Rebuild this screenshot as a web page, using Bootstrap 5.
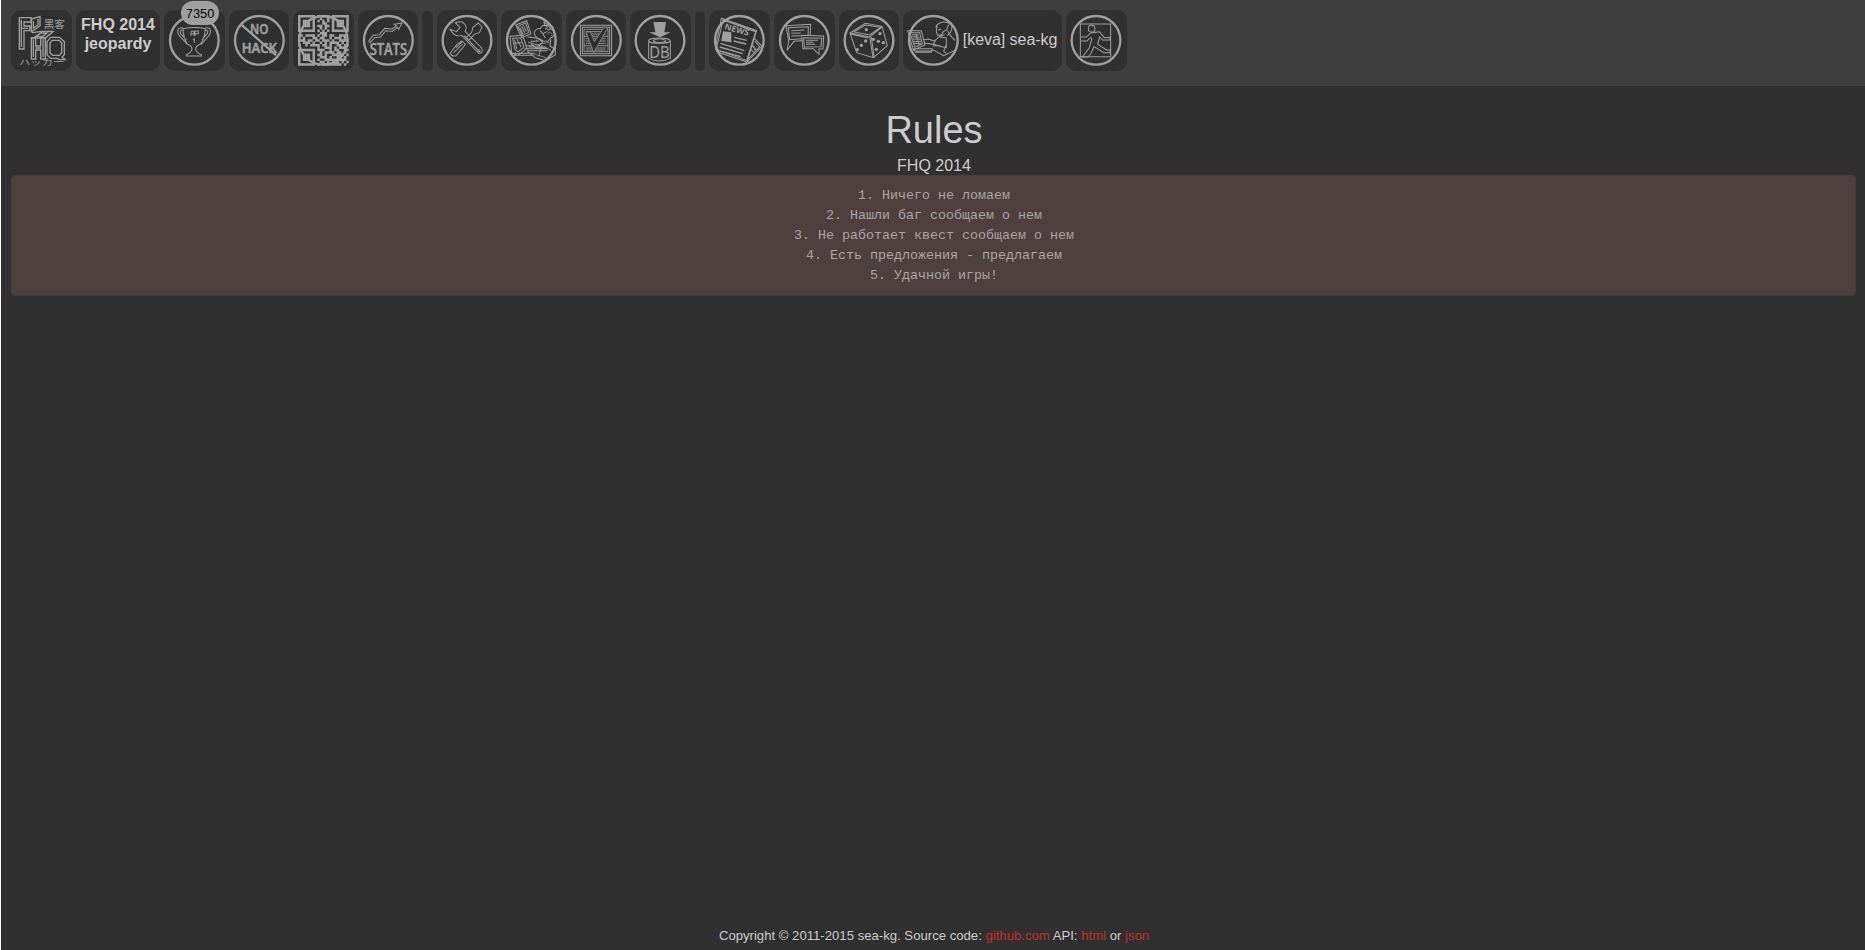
<!DOCTYPE html>
<html lang="ru">
<head>
<meta charset="utf-8">
<title>FHQ 2014 jeopardy</title>
<link rel="stylesheet" href="https://cdn.jsdelivr.net/npm/bootstrap@5.3.0/dist/css/bootstrap.min.css">
<style>
html{background:#fff;overflow:hidden}
body{margin-left:1px;min-height:950px;background:#303030;color:#ccc;font-family:"Liberation Sans",Arial,sans-serif;font-size:16px;line-height:20px}
.topbar{height:86px;background:#3e3e3e;padding:10px 0 0 10.4px;gap:4.03px}
.tile{height:61px;width:60.6px;border-radius:10px;background:#303030;padding:5px;flex:none}
.tile svg{width:50.7px;height:50.7px;display:block;flex:none;fill:none;stroke:#a0a0a0;stroke-width:3;overflow:visible}
.tile svg .ring{stroke-width:7}
.tile svg .solid{fill:#a0a0a0;stroke:none}
.tile svg text{fill:#a0a0a0;stroke:none}
.tile svg .heavy{stroke:#a0a0a0;stroke-width:1.6}
.tile svg .thin{stroke-width:2}
.slot{width:10.2px;height:60px;margin-top:1px;border-radius:5px;background:#303030;flex:none}
.brand{width:84px;font-weight:bold;line-height:19.2px;text-align:center}
.who{width:159px;gap:4px;white-space:nowrap}
.who span{letter-spacing:-.05px;margin-top:-2px}
.score{position:absolute;left:17px;top:-9px;width:38px;height:24px;line-height:25px;border-radius:12px;background:#a0a0a0;color:#000;font-size:12.8px;text-align:center}
h1{font-size:38px;line-height:44px;font-weight:400;margin:0;padding:22px 0 0 2px}
.subtitle{margin-top:4px;padding-left:2px;line-height:20px}
.rules{margin:-1px 9px 0 10px;height:121px;padding:10px 9px 8px 10px;border:1px solid #483b3b;border-radius:4px;background:#4f403f;color:#aaa4a2;font:13.33px/20px "Liberation Mono","Courier New",monospace}
.foot{font-size:13.15px;line-height:16px;padding:0 0 6px 2px}
.foot a{color:#c12e2a;text-decoration:none}
</style>
<script src="https://cdn.jsdelivr.net/npm/bootstrap@5.3.0/dist/js/bootstrap.bundle.min.js"></script>
</head>
<body class="d-flex flex-column">
<nav class="topbar d-flex align-items-start">
 <div class="tile"><svg viewBox="48 45 152 152"><g stroke-width="4"><path d="M58 53h35v13H72v12h17v14H72v55H58zM94 57l26-7v28l-26 17zM64 59v82M64 85h20M100 62v22l14-9V57M96 98l30-4h34l-24 20H96M108 109l14-10h19l-13 10z"/><path d="M94 113h13v25h15v-25h14v64h-14v-27h-15v27H94zM100 118v53M129 118v53M106 144h17"/><path d="M152 112h26l15 13v39l-7 7 9 8h-17l-6-4h-20l-11-11v-39zM157 121l-7 8v29l8 8h20l7-8v-29l-8-8z"/></g><text x="131" y="84" font-size="32" font-family="Noto Sans CJK SC">黑客</text><text transform="translate(57 194) scale(1 .68)" x="0" y="0" font-size="33" textLength="136" lengthAdjust="spacingAndGlyphs" font-family="Noto Sans CJK JP">ハッカー</text></svg></div>
 <div class="tile brand">FHQ 2014<br>jeopardy</div>
 <div class="tile position-relative"><svg viewBox="508 45 152 152"><circle class="ring" cx="584" cy="121" r="73"/><path d="M550 86q34-7 67 0-2 30-15 46-14 7-14 14 0 10 17 18v4h-45v-4q17-8 17-18 0-7-14-14-11-16-13-46zM550 84c-17-5-21 11-9 25l23 25M617 84c17-5 20 11 9 25l-22 25M549 91c-10-3-10 7-1 15l12 14M617 91c10-3 10 7 1 15l-11 14M574 94h9v13M574 94v14M586 108V93h10v8h-8M574 101h22M580 120l4-3v12"/></svg><span class="score">7350</span></div>
 <div class="tile"><svg viewBox="42 45 152 152"><circle class="ring" cx="118" cy="121" r="73"/><path class="ring" d="M62 72l106 93"/><g font-family="Open Sans" font-weight="600" font-size="43"><text class="heavy" x="90" y="102" textLength="55" lengthAdjust="spacingAndGlyphs">NO</text><text class="heavy" x="65" y="159" textLength="106" lengthAdjust="spacingAndGlyphs">HACK</text></g></svg></div>
 <div class="tile"><svg viewBox="234 45 152 152"><path id="qr" class="solid"/><circle class="ring" cx="310" cy="121" r="73"/></svg></div>
 <div class="tile"><svg viewBox="429 45 152 152"><circle class="ring" cx="505" cy="121" r="73"/><path d="M446 123l13-17 19-2 16-19 21 2 15-9-7-5 23-4-10 20-3-7-17 12-19-2-15 19-18 2-14 15z"/><text class="heavy" x="449" y="164" font-family="Open Sans" font-weight="600" font-size="47" textLength="112" lengthAdjust="spacingAndGlyphs">STATS</text></svg></div>
 <div class="slot"></div>
 <div class="tile"><svg viewBox="66 45 152 152"><circle class="ring" cx="141" cy="121" r="73"/><path d="M106 68q24-9 32 12 2 9-3 14l50 50q6 16-9 16l-51-54q-20 8-35-18l20 7 10-13zM175 69l11 12-8 17-15 5-16 17-8-8 16-15 4-15zM126 123l10 10-10 13-18 21q-13 4-17-8l20-26zM108 143l17-16M101 158l27-26M132 107l43 44"/><circle cx="177" cy="152" r="3"/></svg></div>
 <div class="tile"><svg viewBox="258 45 152 152"><circle class="ring" cx="334" cy="121" r="73"/><path d="M287 75l33-13 13 39-28 12zM293 79l24-10 9 28-19 9zM299 81l10 21M305 78l9 20M311 76l8 19M270 109l38-3 13 39-28 21-18-8zM278 115l24-2 10 29-18 13-9-5zM284 119l6 28M291 118l12 23M282 130l22-2M273 160h71M281 166h60M322 110l31 5 15 11-10 11-33-10M314 146h70M321 152h61M350 112c-16-13-2-29 11-26 4-12 26-15 29 0 18 4 15 24 2 28l-8 10-15-1zM360 92l9 9 14-7M369 103l7 11M370 67l28 13 8 24M373 58v17l10 7M390 91l-15-6M392 118l-2 20 16 11M334 133l14 10h30l15 8M322 154l25 20 30 8 29-18V100M356 169l10-33M333 124h22M319 137h23"/><path class="thin" d="M325 139h51M326 142h37M336 160l42 13M365 118l-17 3M350 134l38-7M382 103c5-10 15-6 13 4"/></svg></div>
 <div class="tile"><svg viewBox="453 45 152 152"><circle class="ring" cx="529" cy="121" r="73"/><path d="M481 76h94v91h-94zM487 82h82v79h-82z"/><path d="M492 88h72v67h-72zM497 95h60M497 102h60M492 109h72M497 116h60M497 123h60M497 130h60M492 137h72M497 144h60M497 150h60" style="stroke-width:2.5"/><path class="thin" d="M498 96h14l11 29 29-43h12l-43 76z" fill="#303030"/></svg></div>
 <div class="tile"><svg viewBox="48 45 152 152"><circle class="ring" cx="123" cy="121" r="73"/><path class="solid" d="M103 66h38l-5 31h19l-32 15-33-15h19z"/><path d="M89 122v53q32 16 65 0v-53"/><ellipse cx="121" cy="122" rx="32" ry="8"/><path d="M102 121q20-10 39 0M102 123q20 10 39 0"/><text class="heavy" x="91" y="174" font-family="Open Sans" font-size="47" textLength="61" lengthAdjust="spacingAndGlyphs" style="stroke-width:.6">DB</text></svg></div>
 <div class="slot"></div>
 <div class="tile"><svg viewBox="282 45 152 152"><circle class="ring" cx="358" cy="121" r="73"/><path d="M304 55l106 37-29 94-88-30q-11-9-4-27zM309 60l98 35-27 86-83-29q-9-10-3-26zM404 116l22 23-45 47M405 124l14 16-34 37M397 138l13 13M392 148l10 10M401 136l4 15"/><path class="solid" d="M309 94l25 3v30l-30-4z"/><path stroke-width="4" d="M343 112l37 9M341 123l37 9M301 130l72 22M299 141l69 20M297 152l65 18"/><text transform="translate(312 87) rotate(16)" font-family="Open Sans" font-weight="700" font-size="25" textLength="75" lengthAdjust="spacingAndGlyphs">NEWS</text></svg></div>
 <div class="tile"><svg viewBox="477 45 152 152"><circle class="ring" cx="553" cy="121" r="73"/><path d="M498 77l74-4-2 47-48 4-21 27 5-27zM505 83l60-3-1 35-55 4zM514 92l39-2M514 100l28-1M514 108l29-1"/><path fill="#303030" d="M545 106l66 2-2 38-12 1v16l-17-17h-31z"/><path d="M551 113l54 2-2 25-50 1zM558 121h36M558 127h22M558 133h28"/></svg></div>
 <div class="tile"><svg viewBox="72 45 152 152"><circle class="ring" cx="147" cy="121" r="73"/><path d="M90 99l46-29 50 9 16 58-42 36-50-15zM91 99l58 12 37-30M94 103l51 11M149 110l10 62M154 111l8 58M136 75l45 7-32 23-47-9z"/><g class="solid"><circle cx="139" cy="89" r="5"/><circle cx="137" cy="123" r="5"/><circle cx="124" cy="136" r="5"/><circle cx="112" cy="149" r="5"/><circle cx="180" cy="101" r="5"/><circle cx="160" cy="118" r="5"/><circle cx="175" cy="124" r="5"/><circle cx="190" cy="128" r="5"/><circle cx="169" cy="148" r="5"/></g></svg></div>
 <div class="tile who d-flex align-items-center"><svg viewBox="265 45 152 152"><circle class="ring" cx="341" cy="121" r="73"/><path d="M264 92h41l11 43-35 15zM271 98h29l8 34-23 9zM277 104l20 1M278 110l22 2M280 117l22 1M282 124l22 1M283 130l21 1M289 102l9 32M282 146h55v7h-51zM285 157h52M310 120l16-3 20 7-5 9-29-4M344 123l14-13 22 4v29l-20-4-18-7M360 110l15-7M348 83c4-14 21-21 38-14 17 6 10 18 7 27l-10 11M352 77l-2 18 4 11 12-2 5-9 10-5 6-17M355 90l9-2M383 92l14 20 9 9M380 133l-8 20 8 7M337 148l35 19 40-19M339 137h23"/></svg><span>[keva] sea-kg</span></div>
 <div class="tile"><svg viewBox="753 45 152 152"><circle class="ring" cx="828" cy="121" r="73"/><path d="M781 72h91v98h-91z"/><circle cx="815" cy="86" r="10"/><path d="M782 111h17l13-12 26-4 15 18 17-1v8h-22l-9-9-6 22 27 17h10v8h-18l-30-18-10 22-8 9h-17l20-26 9-29-5-3-10 10h-19"/></svg></div>
</nav>
<main class="flex-grow-1 text-center">
 <h1>Rules</h1>
 <div class="subtitle">FHQ 2014</div>
 <div class="rules">1. Ничего не ломаем<br>2. Нашли баг сообщаем о нем<br>3. Не работает квест сообщаем о нем<br>4. Есть предложения - предлагаем<br>5. Удачной игры!</div>
</main>
<footer class="foot text-center">Copyright © 2011-2015 sea-kg. Source code: <a href="#">github.com</a> API: <a href="#">html</a> or <a href="#">json</a></footer>
<script>
// Module rows of the QR code icon
const rows=[
"111111101011101111111","100000100100101000001","101110101010101011101","101110100011001011101",
"101110101101101011101","100000100101001000001","111111101010101111111","000000000111000000000",
"110111101011011001110","101000110110010111010","111011011011101001111","001110100101011110100",
"100101111011010011011","000000001001110101110","111111101110010110011","100000100101111011010",
"101110101101001111101","101110100111010011010","101110101001111111110","100000100110101110101","111111101011111111010"];
const m=152/21;
let d="";
rows.forEach((r,y)=>[...r].forEach((c,x)=>{if(c==="1")d+=`M${234+x*m} ${45+y*m}h${m+.3}v${m+.3}h${-m-.3}z`}));
document.getElementById("qr").setAttribute("d",d);
</script>
</body>
</html>
